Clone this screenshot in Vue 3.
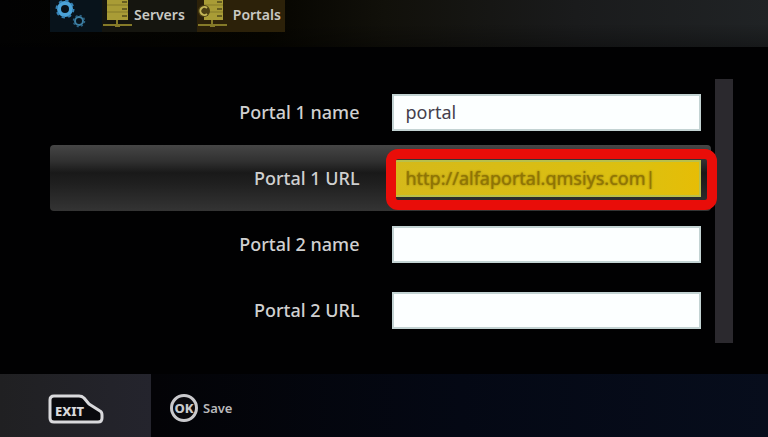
<script setup>
import { ref } from 'vue';

const activeField = ref('portal1Url');

const fields = ref([
  { id: 'portal1Name', label: 'Portal 1 name', value: 'portal' },
  { id: 'portal1Url', label: 'Portal 1 URL', value: 'http://alfaportal.qmsiys.com|' },
  { id: 'portal2Name', label: 'Portal 2 name', value: '' },
  { id: 'portal2Url', label: 'Portal 2 URL', value: '' }
]);
</script>

<template>
  <div class="screen">
    <header class="top-bar">
      <nav class="breadcrumb">
        <a href="#" class="crumb crumb-settings" aria-label="Settings">
          <svg width="40" height="32" viewBox="0 0 40 32" fill="none">
            <circle cx="15" cy="9" r="6" stroke="#4ba3d8" stroke-width="4" />
            <circle cx="15" cy="9" r="8.5" stroke="#3582b5" stroke-width="2" stroke-dasharray="3.3 3.37" />
            <circle cx="29" cy="21" r="4" stroke="#3d7fa3" stroke-width="2" />
            <circle cx="29" cy="21" r="5.5" stroke="#2c6283" stroke-width="1.5" stroke-dasharray="2.1 2.22" />
          </svg>
        </a>
        <a href="#" class="crumb crumb-servers">
          <svg width="32" height="32" viewBox="0 0 32 32">
            <path d="M5 0h21v20H5z" fill="#a99c36" />
            <path d="M5 5h21M5 12h21" stroke="#857a28" />
            <path d="M20 2h5M20 9h5M20 16h5" stroke="#665d20" stroke-width="2" />
            <path d="M15 20v7M1 25h29" stroke="#857a28" stroke-width="2" />
            <path d="M13 24h5v3h-5z" fill="#857a28" />
          </svg>
          <span>Servers</span>
        </a>
        <a href="#" class="crumb crumb-portals">
          <svg width="32" height="32" viewBox="0 0 32 32">
            <path d="M7 0h19v20H7z" fill="#a99c36" />
            <path d="M7 5h19M7 12h19" stroke="#857a28" />
            <path d="M20 2h5M20 9h5M20 16h5" stroke="#665d20" stroke-width="2" />
            <circle cx="7" cy="11" r="6" fill="#4b3f14" />
            <path d="M10 8a4 4 0 1 0 0 6" fill="none" stroke="#c5b757" stroke-width="2" />
            <path d="M15 20v7M1 25h29" stroke="#857a28" stroke-width="2" />
            <path d="M13 24h5v3h-5z" fill="#857a28" />
          </svg>
          <span>Portals</span>
        </a>
      </nav>
    </header>

    <main class="content">
      <form class="field-list" @submit.prevent>
        <div
          v-for="field in fields"
          :key="field.id"
          :class="['field-row', field.id === activeField ? 'field-row-active' : '']"
        >
          <label :for="field.id">{{ field.label }}</label>
          <div class="field-box">
            <input
              :id="field.id"
              v-model="field.value"
              type="text"
              autocomplete="off"
              spellcheck="false"
              @focus="activeField = field.id"
            >
            <div v-if="field.id === activeField" class="field-marker"></div>
          </div>
        </div>
      </form>
      <div class="scroll-track"></div>
    </main>

    <footer class="bottom-bar">
      <button type="button" class="exit-button" aria-label="Exit">
        <svg width="56" height="32" viewBox="0 0 56 32">
          <path d="M6 3h25q3 0 5 2l5 6 11 7q2 1 2 4v3q0 4-4 4H6q-4 0-4-4V7q0-4 4-4z" fill="#09090d" stroke="#d9d9dc" stroke-width="3" stroke-linejoin="round" />
          <text x="7" y="23" class="exit-text">EXIT</text>
        </svg>
      </button>
      <button type="button" class="save-button">
        <svg width="30" height="30" viewBox="0 0 30 30">
          <circle cx="15" cy="15" r="12.5" fill="#09090d" stroke="#c9c9cc" stroke-width="3" />
          <text x="15" y="20" class="ok-text">OK</text>
        </svg>
        <span>Save</span>
      </button>
    </footer>
  </div>
</template>

<style>
body {
  margin: 0;
  background-color: #000;
}
</style>

<style scoped>
.screen {
  display: flex;
  flex-direction: column;
  min-height: 100vh;
  background-color: #010102;
  color: #d0d0d0;
  font-family: "Noto Sans", "Open Sans", sans-serif;
}

.top-bar {
  height: 47px;
  padding-left: 50px;
  background: linear-gradient(to bottom, transparent 50%, rgba(0, 0, 0, 0.3)),
    linear-gradient(to right, #020202 0%, #060500 35%, #11100a 50%, #1a1b1c 75%, #202325 100%);
}

.breadcrumb {
  display: flex;
  width: max-content;
}

.crumb {
  display: flex;
  align-items: center;
  height: 32px;
  color: #c9c9c4;
  font-size: 14px;
  font-weight: 600;
  text-decoration: none;
}

.crumb svg {
  flex: none;
}

.crumb span {
  padding-bottom: 4px;
}

.crumb-settings {
  padding-right: 12px;
  background-color: #08131b;
}

.crumb-servers {
  padding-right: 12px;
  background-color: #15150f;
}

.crumb-portals {
  gap: 4px;
  padding-right: 4px;
  background-color: #2c2109;
}

.content {
  display: flex;
  flex: 1;
  gap: 4px;
  padding: 32px 35px 31px 50px;
}

.field-list {
  flex: 1;
}

.field-row {
  display: grid;
  grid-template-columns: 1fr 1fr;
  align-items: center;
  gap: 32px;
  height: 66px;
  padding-right: 10px;
  border-radius: 4px;
}

.field-row-active {
  background: linear-gradient(to bottom, #464646 0%, #303030 25%, #191919 42%, #202020 60%, #343434 100%);
}

.field-row label {
  font-size: 18px;
  font-weight: 500;
  line-height: 24px;
  text-align: right;
}

.field-box {
  position: relative;
}

.field-box input {
  display: block;
  box-sizing: border-box;
  width: 100%;
  height: 37px;
  padding: 0 12px;
  border: 2px solid #c3d3d3;
  border-radius: 0;
  outline: none;
  background-color: #fcffff;
  color: #45404c;
  font-family: inherit;
  font-size: 18px;
}

.field-row-active input {
  border-color: #b9c04a;
  background: linear-gradient(to right, #d5b91a, #dcc010 80%, #e6bd06);
  color: #8f7406;
  text-shadow: 0 0 2px #7d6500;
}

/* red frame around the selected field */
.field-marker {
  position: absolute;
  top: -11px;
  right: -16px;
  bottom: -13px;
  left: -6px;
  border: 10px solid #e90d09;
  border-radius: 12px;
  pointer-events: none;
}

.scroll-track {
  width: 18px;
  background-color: #2b292e;
}

.bottom-bar {
  display: flex;
  height: 63px;
  background: linear-gradient(to right, #030306 20%, #040814 60%, #070d1c 100%);
}

.exit-button,
.save-button {
  display: flex;
  align-items: center;
  border: none;
  color: inherit;
  font-family: inherit;
  cursor: pointer;
}

.exit-button {
  width: 151px;
  padding: 6px 0 0 48px;
  background: linear-gradient(to right, #202022, #24242d);
}

.exit-text {
  fill: #d9d9dc;
  font-size: 13px;
  font-weight: 800;
}

.save-button {
  gap: 4px;
  padding: 4px 0 0 18px;
  background: none;
  color: #b9b9bb;
  font-size: 13px;
  font-weight: 600;
}

.ok-text {
  fill: #c9c9cc;
  font-size: 13px;
  font-weight: 800;
  text-anchor: middle;
}
</style>
